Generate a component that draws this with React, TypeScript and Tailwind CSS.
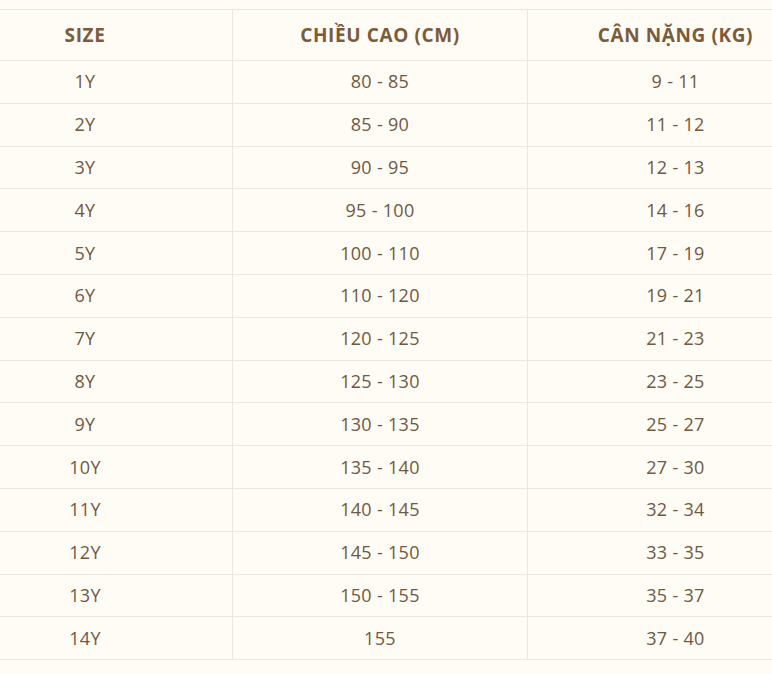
const rows: [string, string, string][] = [
  ['1Y', '80 - 85', '9 - 11'],
  ['2Y', '85 - 90', '11 - 12'],
  ['3Y', '90 - 95', '12 - 13'],
  ['4Y', '95 - 100', '14 - 16'],
  ['5Y', '100 - 110', '17 - 19'],
  ['6Y', '110 - 120', '19 - 21'],
  ['7Y', '120 - 125', '21 - 23'],
  ['8Y', '125 - 130', '23 - 25'],
  ['9Y', '130 - 135', '25 - 27'],
  ['10Y', '135 - 140', '27 - 30'],
  ['11Y', '140 - 145', '32 - 34'],
  ['12Y', '145 - 150', '33 - 35'],
  ['13Y', '150 - 155', '35 - 37'],
  ['14Y', '155', '37 - 40'],
];

const headers = ['SIZE', 'CHIỀU CAO (CM)', 'CÂN NẶNG (KG)'];

export default function App() {
  return (
    <div className="w-[772px] h-[674px] overflow-hidden bg-[#fffcf5] pt-[9px] font-['Open_Sans','Lato',sans-serif]">
      <div className="ml-[-62px] w-[885px] border-t border-[#ece7dc]">
        <div className="grid grid-cols-3 h-[51px] border-b border-[#ece7dc]">
          {headers.map((h, i) => (
            <div
              key={h}
              className={`flex items-center justify-center text-[19px] font-bold tracking-[0.6px] text-[#7b5b3b] ${i < 2 ? 'border-r border-[#ece7dc]' : ''}`}
            >
              {h}
            </div>
          ))}
        </div>
        {rows.map((r) => (
          <div key={r[0]} className="grid grid-cols-3 h-[42.8px] border-b border-[#ece7dc]">
            {r.map((c, i) => (
              <div
                key={i}
                className={`flex items-center justify-center text-[18px] tracking-[0.3px] text-[#6f5844] ${i < 2 ? 'border-r border-[#ece7dc]' : ''}`}
              >
                {c}
              </div>
            ))}
          </div>
        ))}
      </div>
    </div>
  );
}
